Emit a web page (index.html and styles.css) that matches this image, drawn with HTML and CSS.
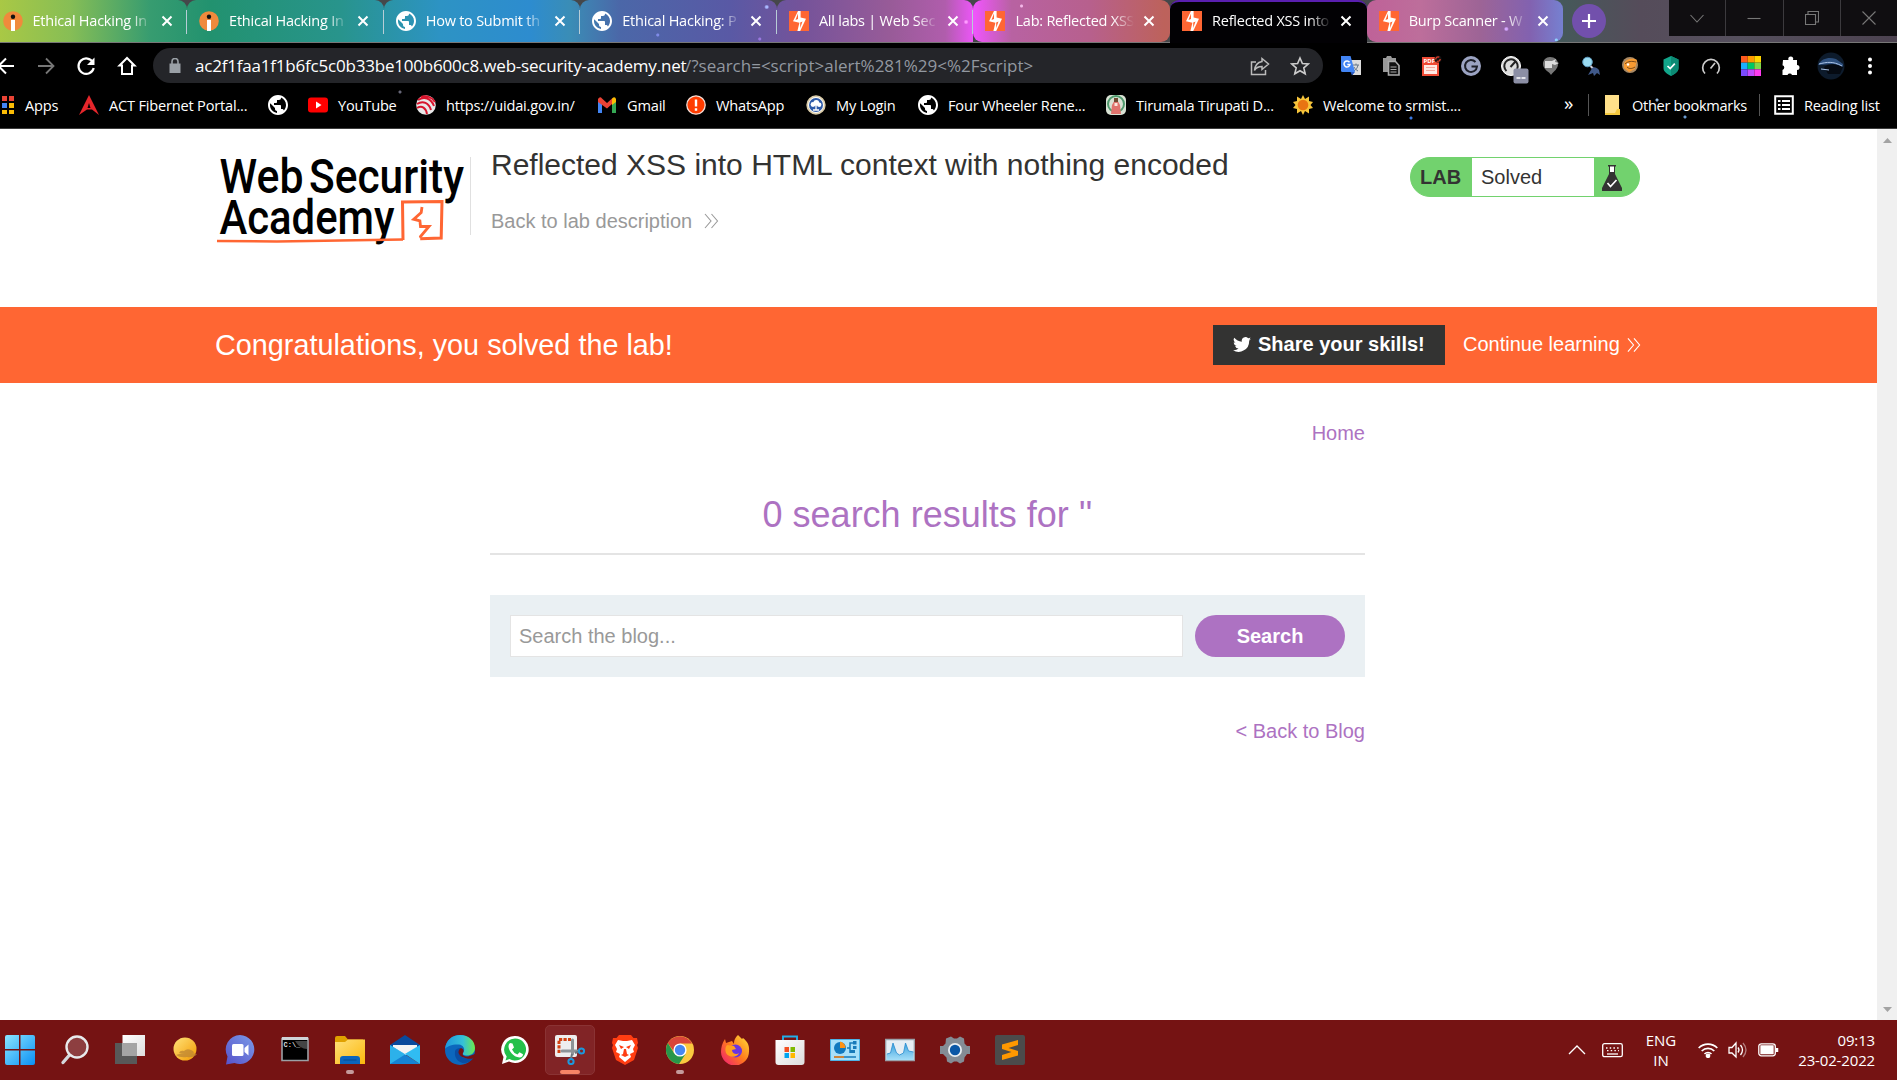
FILE: index.html
```html
<!DOCTYPE html>
<html lang="en">
<head>
<meta charset="utf-8">
<title>Reflected XSS into HTML context with nothing encoded</title>
<link rel="stylesheet" href="styles.css">
</head>
<body>
<svg class="defs" aria-hidden="true">
  <defs>
    <linearGradient id="gwin" x1="0" y1="0" x2="1" y2="1"><stop offset="0" stop-color="#8be6ff"/><stop offset="1" stop-color="#0a90f5"/></linearGradient>
    <linearGradient id="ggrey" x1="0" y1="0" x2="1" y2="1"><stop offset="0" stop-color="#fff"/><stop offset="1" stop-color="#ddd"/></linearGradient>
    <linearGradient id="gsun" x1="0" y1="0" x2="1" y2="1"><stop offset="0" stop-color="#ffe27a"/><stop offset="1" stop-color="#f39a00"/></linearGradient>
    <linearGradient id="gchat" x1="1" y1="0" x2="0" y2="1"><stop offset="0" stop-color="#7b9be8"/><stop offset="1" stop-color="#5751c9"/></linearGradient>
    <linearGradient id="gfold" x1="0" y1="0" x2="1" y2="1"><stop offset="0" stop-color="#ffe07a"/><stop offset="1" stop-color="#fbb80c"/></linearGradient>
    <linearGradient id="gedge" x1="0" y1="0" x2="1" y2="0"><stop offset="0" stop-color="#1f97de"/><stop offset=".6" stop-color="#35c1d8"/><stop offset="1" stop-color="#6bea4c"/></linearGradient>
    <linearGradient id="gfox" x1="1" y1="0" x2="0" y2="1"><stop offset="0" stop-color="#ffe23a"/><stop offset=".5" stop-color="#ff7a1c"/><stop offset="1" stop-color="#f0147c"/></linearGradient>
    <linearGradient id="gwave" x1="0" y1="0" x2="0" y2="1"><stop offset="0" stop-color="#3aa0dd"/><stop offset="1" stop-color="#a5def8"/></linearGradient>
    <symbol id="burp" viewBox="0 0 20 20"><path fill="#ff6633" d="M0 0h20v20H0z"/><path fill="#fff" d="M9 0h2.600v6.600l5.400 1.200L11.200 20H8.400l2-8.200L4 10.300z"/><path fill="#ff6633" d="M9 2.500v5.500L6.500 9z"/><path fill="#ff6633" d="M11.200 17v-5.500l2.300-1z"/></symbol>
    <symbol id="globe" viewBox="2 2 20 20"><path fill="#fff" d="M12 2C6.480 2 2 6.480 2 12s4.480 10 10 10 10-4.480 10-10S17.520 2 12 2zm-1 17.930c-3.950-.49-7-3.850-7-7.930 0-.62.08-1.210.21-1.790L9 15v1c0 1.100.9 2 2 2v1.930zm6.900-2.540c-.26-.81-1-1.390-1.900-1.390h-1v-3c0-.55-.45-1-1-1H8v-2h2c.55 0 1-.45 1-1V7h2c1.100 0 2-.9 2-2v-.410c2.930 1.190 5 4.060 5 7.410 0 2.080-.8 3.970-2.100 5.390z"/></symbol>
    <symbol id="info" viewBox="0 0 20 20"><circle cx="10" cy="10" r="9.800" fill="#f08a3c"/><circle cx="10" cy="5.800" r="2.200" fill="#111"/><path fill="#fff" d="M8 9h4v11H8z"/></symbol>
    <symbol id="x" viewBox="0 0 12 12"><path d="M1.500 1.500l9 9m0-9l-9 9" stroke="#fff" stroke-width="2" fill="none"/></symbol>
  </defs>
</svg>

<header class="tabstrip">
  <div class="tab"><svg class="fav"><use href="#info"/></svg><span class="tab-title">Ethical Hacking In</span><svg class="close"><use href="#x"/></svg></div>
  <div class="tab"><svg class="fav"><use href="#info"/></svg><span class="tab-title">Ethical Hacking In</span><svg class="close"><use href="#x"/></svg></div>
  <div class="tab"><svg class="fav"><use href="#globe"/></svg><span class="tab-title">How to Submit th</span><svg class="close"><use href="#x"/></svg></div>
  <div class="tab"><svg class="fav"><use href="#globe"/></svg><span class="tab-title">Ethical Hacking: P</span><svg class="close"><use href="#x"/></svg></div>
  <div class="tab"><svg class="fav"><use href="#burp"/></svg><span class="tab-title">All labs | Web Sec</span><svg class="close"><use href="#x"/></svg></div>
  <div class="tab nosep"><svg class="fav"><use href="#burp"/></svg><span class="tab-title">Lab: Reflected XSS</span><svg class="close"><use href="#x"/></svg></div>
  <div class="tab active"><svg class="fav"><use href="#burp"/></svg><span class="tab-title">Reflected XSS into</span><svg class="close"><use href="#x"/></svg></div>
  <div class="tab nosep"><svg class="fav"><use href="#burp"/></svg><span class="tab-title">Burp Scanner - W</span><svg class="close"><use href="#x"/></svg></div>
  <div class="newtab"><svg width="14" height="14" viewBox="0 0 14 14"><path d="M7 0v14M0 7h14" stroke="#fff" stroke-width="2.200"/></svg></div>
  <div class="winctl">
    <span><svg width="14" height="14" viewBox="0 0 14 14"><path d="M.5 4l6.500 7 6.500-7"/></svg></span>
    <span><svg width="14" height="14" viewBox="0 0 14 14"><path d="M.5 7.500h13"/></svg></span>
    <span><svg width="14" height="14" viewBox="0 0 14 14"><path d="M.5 3.500h10v10H.5zM3 3.500V.500h10.500V11h-3"/></svg></span>
    <span><svg width="14" height="14" viewBox="0 0 14 14"><path d="M.5.500l13 13m0-13l-13 13"/></svg></span>
  </div>
</header>

<nav class="toolbar">
  <div class="navs">
    <svg width="20" height="20" viewBox="0 0 20 20"><path d="M19 10H3m8-7.500L3.500 10l7.500 7.500" fill="none" stroke="#fff" stroke-width="2"/></svg>
    <svg width="20" height="20" viewBox="0 0 20 20"><path d="M2 10h15M10 2.500l7.500 7.500-7.500 7.500" fill="none" stroke="#777" stroke-width="1.800"/></svg>
    <svg width="20" height="20" viewBox="0 0 20 20"><path d="M17 6.500A7.700 7.700 0 1 0 17.700 12" fill="none" stroke="#fff" stroke-width="2.200"/><path d="M18.500 1.500V9H11z" fill="#fff"/></svg>
    <svg width="20" height="20" viewBox="0 0 20 20"><path d="M10 2L2.500 9.500H5V18h10V9.500h2.500z" fill="none" stroke="#fff" stroke-width="2"/></svg>
  </div>
  <div class="omnibox">
    <svg width="12" height="16" viewBox="0 0 12 16"><path d="M.5 5.500h11V15H.5z" fill="#9aa0a6"/><path d="M3 6V3.500a3 3 0 0 1 6 0V6" fill="none" stroke="#9aa0a6" stroke-width="1.600"/></svg>
    <p class="url"><span class="host">ac2f1faa1f1b6fc5c0b33be100b600c8.web-security-academy.net</span><span class="path">/?search=&lt;script&gt;alert%281%29&lt;%2Fscript&gt;</span></p>
    <svg class="share" width="20" height="20" viewBox="0 0 20 20"><path d="M6 6H1.500v12.500h14V14M12 2.500l6.500 5.500-6.500 5.500V10.500c-4 0-6 1-7.500 4 .5-5 3-8.200 7.500-9z" fill="none" stroke="#bbb" stroke-width="1.500"/></svg>
    <svg width="20" height="20" viewBox="0 0 20 20"><path d="M10 2l2.400 5.500 5.900.5-4.500 3.900 1.400 5.900L10 14.700l-5.200 3.100 1.400-5.900L1.700 8l5.900-.5z" fill="none" stroke="#ccc" stroke-width="1.600"/></svg>
  </div>
  <div class="exts">
    <svg viewBox="0 0 20 20"><path fill="#ddd" d="M9 4h11v15H12z"/><path d="M12 9h6m-3-1.500V9m2 0c-.5 3-2 4.500-4 6m0-4c1 2 2.500 3 4 4" stroke="#678" fill="none"/><path fill="#4285f4" d="M0 0h9.500L14 16H1.500Q0 16 0 14.500z"/><path fill="#2a5cc5" d="M9.500 16H14l-3 3.500z"/><path d="M8.500 6.300A3 3 0 1 0 9 8.500H6.300" fill="none" stroke="#fff" stroke-width="1.500"/></svg>
    <svg viewBox="0 0 20 20"><path fill="#999" d="M2 2h3l1-2h4l1 2h4v4H7v10H2z"/><path fill="#111" stroke="#aaa" stroke-width="1.600" d="M7.500 5.500h7l3.500 4v9.500H7.500z"/><path d="M9.500 11h6m-6 2.500h6m-6 2.500h6" stroke="#aaa" stroke-width="1.200"/></svg>
    <svg viewBox="0 0 20 20"><path fill="#ee4b35" d="M1 1h17v19H1z"/><path fill="#ffe9e4" d="M3 9h13v9H3z"/><path d="M5 11.500h9m-9 3h9" stroke="#f5a99d"/><text x="2.500" y="7" class="pdf">PDF</text><circle cx="17" cy="3" r="3.500" fill="#111"/><path d="M14.800 3.500a2.300 2.300 0 0 1 3.500-2.300M19.200 3a2.300 2.300 0 0 1-3.500 2" stroke="#e33b28" fill="none" stroke-width="1.300"/></svg>
    <svg viewBox="0 0 20 20"><circle cx="10" cy="10" r="10" fill="#9ba3c2"/><path d="M14.500 6A6 6 0 1 0 16 10.500H10.500" fill="none" stroke="#1c1e28" stroke-width="2"/></svg>
    <svg class="wide" viewBox="0 0 28 28"><circle cx="10" cy="10" r="9.500" fill="#ddd" stroke="#fff"/><path d="M5.500 15A6.700 6.700 0 1 1 16 13M9.500 11L14 6" fill="none" stroke="#222" stroke-width="2"/><rect x="12.500" y="12.500" width="15" height="15" rx="2" fill="#8c8fa5"/><path d="M15.500 22h4m1 0h4" stroke="#fff" stroke-width="1.500"/></svg>
    <svg viewBox="0 0 20 20"><path fill="#777" d="M9 1c5 0 8 3 8 7 0 5-4 7-7 11-1-3-8-5-8-11 0-4 3-7 7-7z"/><path fill="#ddd" d="M4 5h7v7H4zM11 5l4-2-1 3 4 1-4 2-3-1z"/></svg>
    <svg viewBox="0 0 20 20"><circle cx="6.500" cy="6" r="4.800" fill="#9bdcf2" stroke="#5d9bc0"/><path d="M9.500 10l4 4" stroke="#ccd" stroke-width="2"/><path fill="#40598a" d="M10 14c2-4 5-3 8 0l1 5-3-2-3 3-1-3-5 2z"/></svg>
    <svg viewBox="0 0 20 20"><circle cx="9" cy="9" r="8" fill="#a88964"/><path fill="#f79a32" d="M3 7c3-5 9-5 13-3l-2 9-6 3-5-4z"/><path d="M4 8c3-3 7-3 11-2M6 11c2 2 5 2 8 0" stroke="#5a3510" fill="none" stroke-width=".8"/><circle cx="7" cy="8.500" r="1.200" fill="#fff"/></svg>
    <svg viewBox="0 0 20 20"><path fill="#12a58a" d="M10 0l7.500 3.500V12c0 4-4 6-7.500 8-3.500-2-7.500-4-7.500-8V3.500z"/><path fill="#0c8a74" d="M10 0l7.500 3.500V12c0 4-4 6-7.500 8z"/><path d="M6.500 10l2.700 2.600 4.600-5" stroke="#fff" stroke-width="1.700" fill="none"/></svg>
    <svg viewBox="0 0 20 20"><path d="M4 17.500A8.300 8.300 0 1 1 16 17.500M9.500 12.500l4.500-5.500" fill="none" stroke="#ccc" stroke-width="1.700"/></svg>
    <svg viewBox="0 0 21 21"><path fill="#ff5a1f" d="M0 0h7v7H0z"/><path fill="#ff9a00" d="M7 0h7v7H7z"/><path fill="#ffd500" d="M14 0h7v7h-7z"/><path fill="#1aaeff" d="M0 7h7v7H0z"/><path fill="#00c864" d="M7 7h7v7H7z"/><path fill="#80d84a" d="M14 7h7v7h-7z"/><path fill="#7a4bff" d="M0 14h7v7H0z"/><path fill="#c34bff" d="M7 14h7v7H7z"/><path fill="#ff3cf0" d="M14 14h7v7h-7z"/></svg>
    <svg viewBox="0 0 20 20"><path fill="#fff" d="M2 4h5.500a2.500 2.500 0 1 1 4.500 0H16v5a2.500 2.500 0 1 1 0 5v5h-5a2.500 2.500 0 0 0-4.500 0H1.500v-5a2.500 2.500 0 0 0 0-4.800z"/></svg>
    <svg class="avatar" viewBox="0 0 28 28"><circle cx="14" cy="14" r="13.500" fill="#0d1b2c"/><path fill="#2d4f7d" d="M1 13c4-7 11-8 18-6l7 5v3l-9-3z"/><path fill="#050a12" d="M7 15c6-4 12-3 19 0l-3 7H11z"/><path d="M2 12c8-2 14-3 23 2M4 17l8 1" stroke="#a9c2e6" fill="none"/></svg>
    <svg viewBox="0 0 20 20"><g fill="#fff"><circle cx="9" cy="3.500" r="2"/><circle cx="9" cy="10" r="2"/><circle cx="9" cy="16.500" r="2"/></g></svg>
  </div>
</nav>

<nav class="bookmarks">
  <a class="bm b-apps"><svg viewBox="0 0 20 20"><path fill="#ea4335" d="M0 1h5v5H0zM7 1h5v5H7zM14 1h5v5h-5z"/><path fill="#34a853" d="M0 8h5v5H0z"/><path fill="#4285f4" d="M7 8h5v5H7z"/><path fill="#fbbc05" d="M14 8h5v5h-5zM7 15h5v4H7zM14 15h5v4h-5z"/><path fill="#34a853" d="M0 15h5v4H0z"/></svg><span>Apps</span></a>
  <a class="bm b-act"><svg viewBox="0 0 20 20"><path fill="#e5262b" d="M10 0l10 20-7-5.500h-5L0 20z"/><path fill="#000" d="M10 8l1.500 5h-3z"/></svg><span>ACT Fibernet Portal...</span></a>
  <a class="bm b-g1"><svg><use href="#globe"/></svg></a>
  <a class="bm b-yt"><svg viewBox="0 0 20 20"><rect y="2.500" width="20" height="15" rx="3" fill="#f00"/><path fill="#fff" d="M8 6.500l5.500 3.500L8 13.500z"/></svg><span>YouTube</span></a>
  <a class="bm b-uid"><svg viewBox="0 0 20 20"><circle cx="10" cy="10" r="9.800" fill="#e8e8e8"/><g fill="none" stroke="#d8142c" stroke-width="2"><path d="M2 5c6-4 13-2 16 6M1 9c6-4 12-1 14 6M1 13c5-3 9 0 10 6M5 2c5-2 11 0 14 5"/></g></svg><span>https://uidai.gov.in/</span></a>
  <a class="bm b-gm"><svg viewBox="0 0 20 20"><path fill="#4285f4" d="M1 5l4 3v10H1z"/><path fill="#34a853" d="M15 8l4-3v13h-4z"/><path fill="#ea4335" d="M1 4q2-3 4-.5L10 8l5-4.500V9l-5 4.500L1 7z"/><path fill="#fbbc04" d="M15 3.500Q18 1 19 4v3l-4 3z"/></svg><span>Gmail</span></a>
  <a class="bm b-wa"><svg viewBox="0 0 20 20"><circle cx="10" cy="10" r="9.200" fill="#ff3c00" stroke="#f4ddd5" stroke-width="1.300"/><path d="M10 4.500v7m0 1.800v2.500" stroke="#fff" stroke-width="2.400"/></svg><span>WhatsApp</span></a>
  <a class="bm b-login"><svg viewBox="0 0 20 20"><circle cx="10" cy="10" r="8.800" fill="#fff" stroke="#d9cba8" stroke-width="1.800"/><circle cx="10" cy="10" r="7" fill="#2d5aa8"/><circle cx="7" cy="9.500" r="2.400" fill="#fff"/><circle cx="10.300" cy="7.800" r="2.900" fill="#fff"/><circle cx="13.200" cy="9.700" r="2.200" fill="#fff"/><path d="M10 10v5m-3 0h6" stroke="#fff" stroke-width="1.300"/></svg><span>My Login</span></a>
  <a class="bm b-g2"><svg><use href="#globe"/></svg><span>Four Wheeler Rene...</span></a>
  <a class="bm b-ttd"><svg viewBox="0 0 20 20"><rect width="20" height="20" rx="5" fill="#d9e2d4"/><circle cx="10" cy="9" r="8" fill="none" stroke="#4f9a6d" stroke-width="2"/><path fill="#e0736d" d="M10 3l4 7 1 9H5l1-9z"/><path fill="#6d4a30" d="M8 3h4v4H8z"/><path fill="#fbe4da" d="M8.500 8h3v3h-3z"/></svg><span>Tirumala Tirupati D...</span></a>
  <a class="bm b-srm"><svg viewBox="0 0 20 20"><path fill="#f8c63b" d="M10 0l2 4 4-2.500V6l4 1-2.500 3 2.500 3-4 1v4.500L12 16l-2 4-2-4-4 2.500V14l-4-1 2.500-3L0 7l4-1V1.500L8 4z"/><circle cx="10" cy="10" r="5.300" fill="#e87512"/></svg><span>Welcome to srmist....</span></a>
  <span class="more">»</span>
  <a class="bm b-other"><svg viewBox="0 0 20 20"><path fill="#ffe08a" d="M3 0h14v20H3z"/><path fill="#f5c93f" d="M3 18h10l2-4h3v6H3z"/></svg><span>Other bookmarks</span></a>
  <a class="bm b-read"><svg viewBox="0 0 20 20"><path d="M1.200 1.200h17.600v17.600H1.200z" fill="none" stroke="#fff" stroke-width="2"/><path d="M4 6h2.500M4 10h2.500M4 14h2.500M8 6h8M8 10h8M8 14h8" stroke="#fff" stroke-width="1.800"/></svg><span>Reading list</span></a>
</nav>

<div class="viewport">
  <main class="page">
    <section class="lab-head">
      <svg class="logo" width="255" height="100" viewBox="215 150 255 100">
        <text x="219.500" y="193" textLength="84" lengthAdjust="spacingAndGlyphs">Web</text>
        <text x="309" y="193" textLength="155" lengthAdjust="spacingAndGlyphs">Security</text>
        <text x="219.500" y="233.700" textLength="175" lengthAdjust="spacingAndGlyphs">Academy</text>
        <g fill="none" stroke="#ff6633"><path stroke-width="2.400" d="M217 241l60 .5 126-2"/><path stroke-width="3" d="M403 240l-.5-38 39.500-.5-.8 36.500-21 .8"/><path stroke-width="2.800" d="M422 207l-.8 5.500-7.500 6.700 6.200 1.600.6 5.700h8.500l-8.500 10 .5 1.200"/></g>
      </svg>
      <div class="lab-title">
        <h2>Reflected XSS into HTML context with nothing encoded</h2>
        <a class="back">Back to lab description <svg width="15" height="16" viewBox="0 0 15 16"><path d="M1 1l6 7-6 7M7.500 1l6 7-6 7" fill="none" stroke="#999" stroke-width="1.100"/></svg></a>
      </div>
      <div class="status">
        <b>LAB</b><span>Solved</span>
        <i><svg width="20" height="26" viewBox="0 0 20 26"><path fill="#333332" d="M6 0h8v1.500h-1V9l7 14v3H0v-3L7 9V1.500H6z"/><path fill="#fff" d="M8 1.500h4V7H8z"/><path d="M5.500 18l3 3.500 6-6.500" fill="none" stroke="#fff" stroke-width="1.700"/></svg></i>
      </div>
    </section>
    <section class="banner">
      <h4>Congratulations, you solved the lab!</h4>
      <button class="share-btn"><svg width="18" height="17" viewBox="0 0 24 20"><path fill="#fff" d="M24 2.400a10 10 0 0 1-2.800.8A5 5 0 0 0 23.300.500a10 10 0 0 1-3.100 1.200 4.900 4.900 0 0 0-8.400 4.500A14 14 0 0 1 1.700 1a5 5 0 0 0 1.500 6.600A5 5 0 0 1 1 7v.1a5 5 0 0 0 4 4.800 5 5 0 0 1-2.200.1 5 5 0 0 0 4.600 3.400A10 10 0 0 1 0 17.500 14 14 0 0 0 21.500 5z"/></svg>Share your skills!</button>
      <a class="continue">Continue learning <svg width="14" height="16" viewBox="0 0 15 16"><path d="M1 1l6 7-6 7M7.500 1l6 7-6 7" fill="none" stroke="#fff" stroke-width="1.200"/></svg></a>
    </section>
    <section class="blog">
      <a class="home">Home</a>
      <h1>0 search results for ''</h1>
      <form class="search"><div class="field">Search the blog...</div><div class="btn">Search</div></form>
      <a class="toblog">&lt; Back to Blog</a>
    </section>
  </main>
  <aside class="scroll">
    <svg width="9" height="5" viewBox="0 0 9 5"><path fill="#a3a3a3" d="M4.500 0L9 5H0z"/></svg>
    <svg width="9" height="5" viewBox="0 0 9 5"><path fill="#a3a3a3" d="M0 0h9L4.500 5z"/></svg>
  </aside>
</div>

<footer class="taskbar">
  <div class="apps">
    <span><svg viewBox="0 0 30 30"><path fill="url(#gwin)" d="M0 2q0-2 2-2h12v14H0zM15.500 0H28q2 0 2 2v12H15.500zM0 15.500h14V30H2q-2 0-2-2zM15.500 15.500H30V28q0 2-2 2H15.500z"/></svg></span>
    <span><svg viewBox="0 0 30 30"><path d="M9.500 20L3 27.500" stroke="#d4d8dc" stroke-width="3.400" stroke-linecap="round"/><circle cx="17" cy="12" r="10.500" fill="#8d3e40" stroke="#e8eaec" stroke-width="2.400"/></svg></span>
    <span><svg viewBox="0 0 30 30"><path fill="#585858" d="M0 8h22v21H0z"/><path fill="url(#ggrey)" d="M7.500 0H30v21H7.500z"/><path fill="#a4a4a4" d="M7.500 8H22v13H7.500z"/></svg></span>
    <span><svg viewBox="0 0 30 30"><circle cx="15" cy="14" r="11.500" fill="url(#gsun)"/><path fill="#b98233" opacity=".7" d="M9 18q1-3 5-2 3-3 7-1 3 1 3 3zM6 20q9-4 21-1-3 4-10 3-7 1-11-2z"/></svg></span>
    <span><svg viewBox="0 0 30 30"><path fill="url(#gchat)" d="M15 0a14.500 14.500 0 1 1-5.500 28L1 29.500l1.500-8A14.500 14.500 0 0 1 15 0z"/><rect x="7" y="9" width="11.500" height="12" rx="1.500" fill="#fff"/><path fill="#fff" d="M19.500 13l4-3.500v11l-4-3.500z"/></svg></span>
    <span><svg viewBox="0 0 30 30"><path fill="#000" stroke="#9ba0a5" stroke-width="1.600" d="M2 3.500h26v22H2z"/><path d="M2 3.500h26" stroke="#d0d4d8" stroke-width="3"/><path fill="#444" d="M15 6h12v8q-7 0-12-8z"/><text x="3.500" y="12" class="cmd">C:\_</text></svg></span>
    <span class="run"><svg viewBox="0 0 30 30"><path fill="#e0a100" d="M0 3q0-2 2-2h8l3 3.500h15v6H0z"/><path fill="url(#gfold)" d="M0 7h10l3-2.500h17V29H0z"/><path fill="#0b65bd" d="M5 29v-5q0-3 3-3h14q3 0 3 3v5z"/><path d="M8.500 25h13" stroke="#064a90"/></svg></span>
    <span><svg viewBox="0 0 30 30"><path fill="#0a4a9c" d="M0 10L15 0l15 10v5H0z"/><path fill="#f4f4f4" d="M3 10h24v10H3z"/><path fill="#1583d4" d="M0 10l16 10 14 9H0z"/><path fill="#36c5f4" d="M30 10L0 29V10l15 9z" opacity=".7"/><path fill="#30bcf2" d="M30 10v19L15 19z"/></svg></span>
    <span><svg viewBox="0 0 30 30"><circle cx="15" cy="15" r="15" fill="#0c67bd"/><path fill="url(#gedge)" d="M0 14C1 5 7 0 15 0c9 0 15 6 15 13 0 5-4 7.500-8 7.500-3 0-5-1-4-2.500 3-4 0-8-4-8.500C8 9 2 11 0 14z"/><path fill="#0a4da3" d="M10 17c-1 7 5 12 11 11 4-1 7-4 8-6-7 3-15 1-15-5 0-2 1-3 2-4-3 0-6 1-6 4z"/><path fill="#751313" d="M18 18c-1.500 2 2 4 5 3.500L30 19v3.500l-2 1c-4 1-8-.5-11-1.500-5-3-4-7-1-9 3 1 3 3 2 5z"/></svg></span>
    <span><svg viewBox="0 0 30 30"><path fill="#fff" d="M15 1a13.500 13.500 0 1 1-6 25.500L2 29l1.500-7A13.500 13.500 0 0 1 15 1z"/><path fill="#23c04a" d="M15 3.500a11 11 0 1 1-5.500 20.500L5.500 25.500l1.200-4A11 11 0 0 1 15 3.500z"/><path fill="#fff" d="M10 8l2.500.5 1.500 4-2 2q1.500 3.500 5.500 5l2-2.300 3.500 2q0 3-3.500 3.300C13 22 8.500 15.500 8.500 11q.2-2 1.500-3z"/></svg></span>
    <span class="current"><svg viewBox="0 0 30 30"><rect width="22" height="22" rx="2" fill="#eee"/><path d="M4 18V4.500h12" fill="none" stroke="#d24010" stroke-width="3" stroke-dasharray="3.200 1.300"/><path d="M7 16h15M17.500 5v14" stroke="#8d9498" stroke-width="3" stroke-linecap="round"/><path d="M17 19l-1 5M20 18l5-2" stroke="#6c777d" stroke-width="2"/><g fill="none" stroke="#1d98dc" stroke-width="2"><circle cx="16" cy="26.500" r="2.600"/><circle cx="26.500" cy="16" r="2.600"/></g></svg></span>
    <span><svg viewBox="0 0 30 30"><path fill="#ff3d12" d="M9 0h12l2.500 3L27 3l1 5-1 2 1 3-4 12-9 5-9-5-4-12 1-3-1-2 1-5 3.500 0z"/><path fill="#fff" d="M8 5l5 1h4l5-1 3 5-2 4 1 3-4 2 1 3-6 5-6-5 1-3-4-2 1-3-2-4z"/><path fill="#ff3d12" d="M9 10l5 2-3 2zM21 10l-5 2 3 2zM14 14h2l1 5 2 1-4 2-4-2 2-1z"/></svg></span>
    <span class="run"><svg viewBox="0 0 30 30"><circle cx="15" cy="15" r="14" fill="#fbc93f"/><path fill="#d9453a" d="M2.800 8l6.500 9L15 8.500h12A14 14 0 0 0 2.800 8z"/><path fill="#27964a" d="M2.800 8A14 14 0 0 0 14 29l6.500-10L9 18z"/><circle cx="15" cy="15" r="6.600" fill="#fff"/><circle cx="15" cy="15" r="5.200" fill="#4688f1"/></svg></span>
    <span><svg viewBox="0 0 30 30"><path fill="url(#gfox)" d="M18 0l4 4 1-1c5 4 6.500 8 6 13A14 14 0 0 1 1 17C1 13 2 8 5 4l1 4 6-2 2 3c0-5 2-7 4-9z"/><circle cx="15.500" cy="16" r="6.500" fill="#6b35e0"/><path fill="#ff9e20" d="M7 10l7 1 2 3-4 1c0 4 5 5 7 3-2 5-10 5-13 0-1-3-1-6 1-8z"/></svg></span>
    <span><svg viewBox="0 0 30 30"><path d="M8 7V1.500h14V7" fill="none" stroke="#22aee9" stroke-width="1.900"/><path fill="url(#ggrey)" d="M.5 5h29v22q0 3-3 3h-23q-3 0-3-3z"/><path fill="#f25022" d="M9.500 12H14v5H9.500z"/><path fill="#7fba00" d="M15.500 12H20v5h-4.500z"/><path fill="#00a4ef" d="M9.500 18H14v5H9.500z"/><path fill="#ffb900" d="M15.500 18H20v5h-4.500z"/></svg></span>
    <span><svg viewBox="0 0 30 30"><path fill="#a8e0fa" stroke="#4db2e5" d="M.5 4.500h29v21H.5z"/><circle cx="10" cy="13" r="6" fill="#1179bf"/><path fill="#ff9214" d="M10 13V6.500A6.500 6.500 0 0 1 15.500 13z"/><path d="M17 13h3V8h3m-3 10v-8M4 22h22" fill="none" stroke="#1779b9" stroke-width="1.500"/><path fill="#1779b9" d="M23 6h3.500v3.500H23zM23 11h3.500v3H23zM20 15h5v3h-5z"/><path d="M4 22h10" stroke="#f28218" stroke-width="1.600"/></svg></span>
    <span><svg viewBox="0 0 30 30"><path fill="#e6eef4" stroke="#9aa3ab" stroke-width="1.300" d="M.7 4.500h28.600v21H.7z"/><path fill="url(#gwave)" d="M1.500 19l4-1L8 8l3.500 10 3 2 4-2 2-10 3 8 5 1v8H1.500z"/><path fill="none" stroke="#278ccf" stroke-width=".8" d="M2 19l3.500-1L8 8l3.500 10 3 2 4-2 2-10 3 8 5 1"/></svg></span>
    <span><svg viewBox="0 0 30 30"><path fill="#848c95" d="M11 1.500l3 2h3l3-2 4 2 .5 5L27 11h3v8h-3l-2.500 3.500-.5 4-4 2-3-2h-3l-3 2-4-2-.5-4L3 19H0v-8h3l2.500-2.500.5-5z"/><circle cx="15" cy="15" r="7" fill="#e8edf1"/><circle cx="15" cy="15" r="5.200" fill="#0b57a6"/></svg></span>
    <span><svg viewBox="0 0 30 30"><rect width="30" height="30" rx="2" fill="#4b4b4b"/><path fill="#ff9800" d="M7 9.500L23 5v5l-9.500 3L23 16v4.500L7 25v-5l9.500-3L7 14z"/></svg></span>
  </div>
  <div class="tray">
    <svg class="t-up" width="18" height="18" viewBox="0 0 18 18"><path d="M1 13l8-8 8 8"/></svg>
    <svg class="t-key" width="21" height="15" viewBox="0 0 21 15"><rect x=".7" y=".7" width="19.600" height="13" rx="1.800"/><path d="M4 5h14M5 7.700h12" stroke-dasharray="1.500 2.200"/><path d="M5 11h11"/></svg>
    <div class="lang">ENG<br>IN</div>
    <svg class="t-wifi" width="20" height="16" viewBox="0 0 20 16"><path stroke-width="1.700" d="M.7 6a13 13 0 0 1 18.600 0M3.700 9a9 9 0 0 1 12.600 0M6.500 12a5 5 0 0 1 7 0"/><circle cx="10" cy="13.800" r="1.700" class="dot"/></svg>
    <svg class="t-vol" width="20" height="18" viewBox="0 0 20 18"><path d="M1 6.500h3L8 2v14l-4-4H1zM10 6.500q2 2.500 0 5M12.500 4q4 5 0 10"/><path opacity=".45" d="M15 2q6 7 0 14"/></svg>
    <svg class="t-bat" width="21" height="14" viewBox="0 0 21 14"><rect x=".8" y=".8" width="16.500" height="12" rx="2.500"/><path class="dot" d="M3 3h12v7.600H3z"/><path stroke-width="2.500" d="M19 5v4"/></svg>
    <div class="clock">09:13<br>23-02-2022</div>
  </div>
</footer>
</body>
</html>
```
FILE: styles.css
```css
* { box-sizing: border-box; }
body {
  margin: 0;
  width: 1897px;
  height: 1080px;
  overflow: hidden;
  display: flex;
  flex-direction: column;
  background: #000;
  font-family: "Open Sans", "Noto Sans", sans-serif;
}
.defs { position: absolute; width: 0; height: 0; }
svg { display: block; flex: none; }

/* tab strip */
.tabstrip {
  height: 43px;
  flex: none;
  display: flex;
  align-items: flex-start;
  border-bottom: 1px solid #777;
  background: linear-gradient(90deg, #45474a 0, #45474a 1350px, #45595a 1560px, #554c5a 1640px, #56505e 1740px, #4c4250 1897px);
}
.tab {
  position: relative;
  width: 196.6px;
  height: 42px;
  flex: none;
  display: flex;
  align-items: center;
  gap: 10px;
  padding-left: 12px;
  border-radius: 9px 9px 0 0;
  background:
    radial-gradient(circle at 767px 7px, #a9b8ff 0 1px, transparent 2.500px),
    radial-gradient(circle at 966px 22px, #ff9cff 0 1px, transparent 2.500px),
    radial-gradient(circle at 1022px 6px, #f3b8e8 0 1px, transparent 2px),
    radial-gradient(circle at 658px 35px, #7f8be8 0 1px, transparent 2px),
    radial-gradient(circle at 760px 39px, #9a78e0 0 1px, transparent 2px),
    radial-gradient(circle at 1506px 29px, #d6a8ff 0 1px, transparent 2.500px),
    radial-gradient(circle at 1556px 40px, #8fd0ff 0 1px, transparent 2px),
    linear-gradient(90deg, #a9c845 0, #87be55 70px, #379c70 150px, #22926f 210px, #28948c 340px, #2d93c4 440px, #2d8ccf 530px, #3a8db6 570px, #4b67a8 620px, #5959a5 730px, #74539a 800px, #985b98 890px, #b05dac 945px, #ef55fb 975px, #b862a2 1012px, #b7608d 1090px, #bd625b 1165px, #bf6198 1365px, #bd6e9b 1420px, #9d6496 1480px, #8262b0 1530px, #7680d0 1562px);
  background-size: 1897px 43px;
  background-repeat: no-repeat;
  background-attachment: fixed;
}
.tab:first-child { margin-left: -9.5px; }
.tab::after {
  content: "";
  position: absolute;
  right: 0;
  top: 10px;
  width: 1px;
  height: 24px;
  background: #b7cdd6;
}
.tab.nosep { border-radius: 9px; }
.tab.nosep::after, .tab.active::after { display: none; }
.tab.active { background: #020104; border-top: 2px solid #5a1fb0; height: 43px; padding-bottom: 3px; }
.fav { width: 20px; height: 20px; }
.tab-title {
  width: 119px;
  overflow: hidden;
  white-space: nowrap;
  color: #fff;
  font-size: 14.5px;
  line-height: 22px;
  letter-spacing: -.23px;
  -webkit-mask-image: linear-gradient(90deg, #000 82%, transparent);
  mask-image: linear-gradient(90deg, #000 82%, transparent);
}
.close { width: 12px; height: 12px; margin-left: -1px; }
.newtab {
  width: 34px;
  height: 34px;
  margin: 4px 0 0 9px;
  border-radius: 50%;
  background: #7250ac;
  display: flex;
  align-items: center;
  justify-content: center;
}
.winctl { display: flex; margin-left: auto; height: 36px; width: 228px; background: #100e11; }
.winctl span { flex: 1; display: flex; align-items: center; justify-content: center; border-left: 1px solid #3c3a3e; }
.winctl span:first-child { border: 0; }
.winctl path { fill: none; stroke: #777; stroke-width: 1.1; }

/* address bar */
.toolbar { height: 45px; flex: none; display: flex; align-items: center; }
.navs { display: flex; gap: 20.5px; width: 153px; }
.navs svg:first-child { margin-left: -5px; }
.omnibox {
  width: 1170px;
  height: 35px;
  border-radius: 18px;
  background: #242529;
  display: flex;
  align-items: center;
  padding: 0 13px 0 16px;
}
.url { margin: 0 0 0 14px; flex: 1; display: flex; font-size: 17px; line-height: 24px; white-space: nowrap; }
.host { color: #fff; width: 490px; letter-spacing: -.2px; }
.path { color: #9298a0; }
.share { margin-right: 20px; }
.exts { display: flex; flex: 1; padding-left: 18px; gap: 20px; align-items: center; }
.exts svg { width: 20px; height: 20px; overflow: visible; }
.exts .wide { width: 28px; height: 28px; margin: 8px -8px 0 0; }
.exts .avatar { width: 28px; height: 28px; margin: 0 -4px; }
.pdf { font: bold 6px "Open Sans", sans-serif; fill: #fff; }

/* bookmarks */
.bookmarks {
  height: 41px;
  flex: none;
  display: flex;
  align-items: center;
  padding-bottom: 6px;
  border-bottom: 1px solid #3c3c3c;
  color: #fff;
  background:
    radial-gradient(circle at 1411px 30px, #3a78e0 0 1px, transparent 2px),
    radial-gradient(circle at 1657px 12px, #8fb3d8 0 1px, transparent 2px),
    radial-gradient(circle at 1685px 29px, #6a9ad0 0 1px, transparent 2px),
    radial-gradient(circle at 400px 4px, #667 0 1px, transparent 2px),
    #000;
}
.bm { display: flex; align-items: center; gap: 10px; flex: none; font-size: 14.6px; line-height: 22px; white-space: nowrap; letter-spacing: -.2px; }
.bm svg { width: 20px; height: 20px; }
.b-apps { width: 84px; margin-left: -5px; }
.b-act { width: 189px; }
.b-g1 { width: 40px; }
.b-yt { width: 108px; }
.b-uid { width: 181px; }
.b-gm { width: 89px; }
.b-wa { width: 120px; }
.b-login { width: 112px; }
.b-g2 { width: 188px; }
.b-ttd { width: 187px; }
.b-srm { width: 271px; }
.more { width: 24px; font-size: 19px; line-height: 20px; padding-bottom: 4px; }
.b-other { width: 171px; padding-left: 13px; border-left: 1px solid #555; letter-spacing: -.33px; }
.b-read { padding-left: 14px; border-left: 1px solid #555; }

/* page */
.viewport { flex: 1; display: flex; background: #fff; min-height: 0; }
.page { flex: 1; font-family: "Liberation Sans", Arial, sans-serif; color: #333332; }
.scroll { width: 20px; background: #f0f0f0; display: flex; flex-direction: column; justify-content: space-between; align-items: center; padding: 9px 0 8px; }
.lab-head { height: 178px; display: flex; align-items: flex-start; padding-left: 215px; }
.logo { margin-top: 21px; overflow: visible; }
.logo text { font: 500 47.5px "Roboto", "Liberation Sans", sans-serif; fill: #000; }
.lab-title { margin-top: 28px; height: 78px; border-left: 1px solid #e0e0e0; padding-left: 20px; width: 940px; }
.lab-title h2 { margin: -9px 0 0; font-size: 30px; line-height: 34px; font-weight: 400; white-space: nowrap; }
.back { display: flex; align-items: center; gap: 12px; margin-top: 27px; font-size: 20px; line-height: 24px; color: #999; }
.status { margin-top: 28px; width: 230px; height: 40px; border: 1px solid #72d26e; border-radius: 20px; background: #72d26e; display: flex; overflow: hidden; font-size: 20px; line-height: 38px; }
.status b { width: 61px; padding-left: 9px; line-height: 39px; }
.status span { width: 122px; background: #fff; padding-left: 9px; }
.status i { padding: 7px 0 0 8px; }
.banner { height: 76px; background: #ff6633; color: #fff; display: flex; align-items: center; padding-left: 215px; }
.banner h4 { margin: 0; width: 998px; font-size: 28.8px; font-weight: 400; }
.share-btn { width: 232px; height: 40px; border: 0; background: #333332; color: #fff; display: flex; align-items: center; gap: 7px; padding: 0 0 1px 20px; font: bold 20px "Liberation Sans", Arial, sans-serif; white-space: nowrap; }
.continue { margin-left: 18px; padding-bottom: 1px; display: flex; align-items: center; gap: 7px; font-size: 20px; white-space: nowrap; }
.blog { width: 875px; margin-left: 490px; display: flex; flex-direction: column; color: #ad72c2; font-size: 20px; }
.home { align-self: flex-end; margin-top: 38px; line-height: 24px; }
.blog h1 { margin: 47px 0 0; height: 63px; line-height: 46px; font-size: 36px; font-weight: 400; text-align: center; border-bottom: 2px solid #e4e4e4; }
.search { margin: 40px 0 0; height: 82px; padding: 20px; background: #eaf0f3; display: flex; justify-content: space-between; }
.field { width: 673px; height: 42px; border: 1px solid #e4e4e4; background: #fff; color: #999; padding-left: 8px; line-height: 40px; }
.btn { width: 150px; height: 42px; border-radius: 21px; background: #ad72c2; color: #fff; font-weight: 700; text-align: center; line-height: 42px; }
.toblog { align-self: flex-end; margin-top: 42px; line-height: 24px; }

/* taskbar */
.taskbar { height: 60px; flex: none; background: #751313; display: flex; justify-content: space-between; color: #fff; }
.apps { display: flex; align-items: center; gap: 5px; margin-left: -5.5px; }
.apps span { position: relative; width: 50px; height: 50px; border-radius: 5px; display: flex; align-items: center; justify-content: center; }
.apps svg { width: 30px; height: 30px; }
.apps .current { background: #812426; border: 1px solid #8a3334; }
.apps .run::after, .apps .current::after { content: ""; position: absolute; bottom: 1px; width: 8px; height: 4px; border-radius: 2px; background: #c59a9b; }
.apps .current::after { width: 20px; bottom: 0; background: #f88467; }
.cmd { font: bold 7px "Liberation Mono", monospace; fill: #ddd; }
.tray { display: flex; align-items: center; padding-right: 22px; font-size: 15px; line-height: 20px; }
.tray svg { fill: none; stroke: #fff; stroke-width: 1.3; }
.tray .dot { fill: #fff; }
.t-key { margin-left: 16px; }
.lang { width: 50px; margin-left: 13px; text-align: center; }
.t-wifi { margin-left: 12px; }
.t-vol { margin-left: 10px; }
.t-bat { margin-left: 10px; }
.clock { width: 96px; text-align: right; white-space: nowrap; letter-spacing: -.15px; }
```
